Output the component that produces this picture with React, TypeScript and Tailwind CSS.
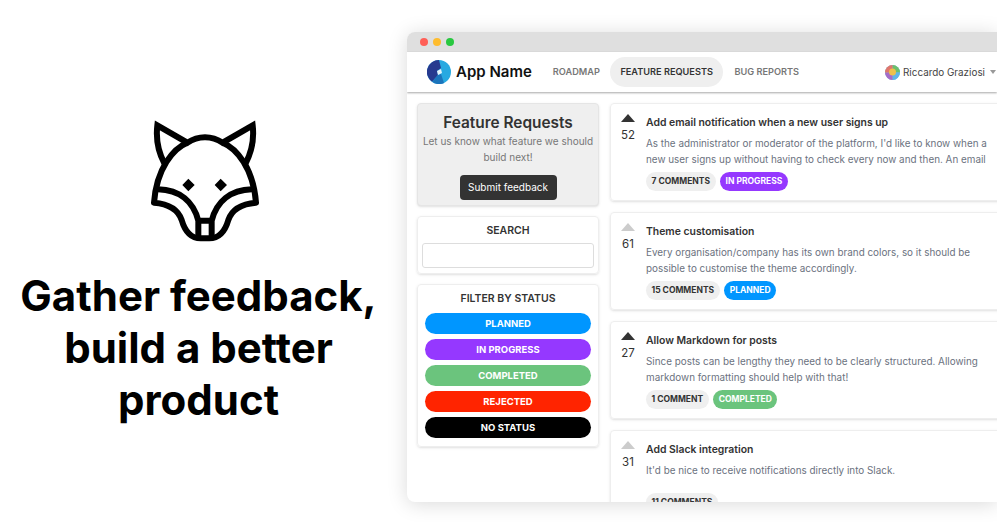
const posts = [
  {
    votes: 52,
    voted: true,
    title: "Add email notification when a new user signs up",
    desc: "As the administrator or moderator of the platform, I'd like to know when a new user signs up without having to check every now and then. An email",
    comments: "7 COMMENTS",
    status: "IN PROGRESS",
    statusClass: "bg-[#9538ff]",
  },
  {
    votes: 61,
    voted: false,
    title: "Theme customisation",
    desc: "Every organisation/company has its own brand colors, so it should be possible to customise the theme accordingly.",
    comments: "15 COMMENTS",
    status: "PLANNED",
    statusClass: "bg-[#0096ff]",
  },
  {
    votes: 27,
    voted: true,
    title: "Allow Markdown for posts",
    desc: "Since posts can be lengthy they need to be clearly structured. Allowing markdown formatting should help with that!",
    comments: "1 COMMENT",
    status: "COMPLETED",
    statusClass: "bg-[#6bc47d]",
  },
  {
    votes: 31,
    voted: false,
    title: "Add Slack integration",
    desc: "It'd be nice to receive notifications directly into Slack.",
    comments: "11 COMMENTS",
    status: "",
    statusClass: "",
  },
];

const filters = [
  { label: "PLANNED", color: "bg-[#0096ff]" },
  { label: "IN PROGRESS", color: "bg-[#9538ff]" },
  { label: "COMPLETED", color: "bg-[#6bc47d]" },
  { label: "REJECTED", color: "bg-[#ff2400]" },
  { label: "NO STATUS", color: "bg-black" },
];

function Fox() {
  return (
    <svg className="ml-[13px] w-[150px] h-[150px]" viewBox="0 0 450 450" fill="none" stroke="black" strokeWidth="18">
      <path d="M103 190 C82 150 78 110 82 76 L172 128 C205 106 245 106 278 128 L368 76 C372 110 368 150 347 190" strokeLinejoin="miter" />
      <path d="M172 128 C130 145 80 205 72 308 C120 312 145 330 155 360 C165 395 185 415 212 415 L238 415 C265 415 285 395 295 360 C305 330 330 312 378 308 C370 205 320 145 278 128" strokeLinejoin="round" />
      <path d="M84 268 C150 270 190 305 205 362 L205 410 M366 268 C300 270 260 305 245 362 L245 410 M205 362 L245 362" />
      <path d="M175 236 L194 255 L175 274 L157 255 Z M272 236 L291 255 L272 274 L254 255 Z" fill="black" stroke="none" />
    </svg>
  );
}

function Logo() {
  return (
    <svg className="w-6 h-6 shrink-0" viewBox="0 0 24 24">
      <circle cx="12" cy="12" r="12" fill="#27a9e1" />
      <path d="M12 0 A12 12 0 0 0 5 21.8 L11 15 L10 11 L14 8 Z" fill="#263a8f" />
      <path d="M5 21.8 A12 12 0 0 0 17 22.9 L14 14 L11 15 Z" fill="#1c75bc" />
      <path d="M10 11 L14 9 L15 13 L11 15 Z" fill="#e6f4fb" />
    </svg>
  );
}

function Avatar() {
  return (
    <svg className="w-[15px] h-[15px] shrink-0" viewBox="0 0 15 15">
      <circle cx="7.5" cy="7.5" r="7.5" fill="#7fb8d8" />
      <path d="M7.5 0 A7.5 7.5 0 0 1 15 7.5 L7.5 7.5 Z" fill="#6cc06c" />
      <path d="M15 7.5 A7.5 7.5 0 0 1 7.5 15 L7.5 7.5 Z" fill="#5fb5e8" />
      <path d="M7.5 15 A7.5 7.5 0 0 1 0 7.5 L7.5 7.5 Z" fill="#a56cc8" />
      <path d="M0 7.5 A7.5 7.5 0 0 1 7.5 0 L7.5 7.5 Z" fill="#e0766c" />
      <circle cx="7.5" cy="7" r="3.5" fill="#efc04a" />
    </svg>
  );
}

function Arrow({ active }: { active: boolean }) {
  return (
    <svg className="w-[14px] h-[8px]" viewBox="0 0 14 8">
      <path d="M7 0 L14 8 L0 8 Z" fill={active ? "#333333" : "#cccccc"} />
    </svg>
  );
}

export default function App() {
  return (
    <div className="w-[997px] h-[522px] overflow-hidden bg-white flex font-['Inter',sans-serif]">
      {/* Left pitch */}
      <div className="w-[397px] shrink-0 flex flex-col items-center pt-[100px]">
        <Fox />
        <h1 className="mt-[20px] text-[42px] leading-[52px] font-bold text-black text-center whitespace-nowrap">
          Gather feedback,
          <br />
          build a better
          <br />
          product
        </h1>
      </div>

      {/* App window */}
      <div className="ml-[10px] mt-[32px] w-[590px] h-[470px] shrink-0 overflow-hidden rounded-l-lg bg-white shadow-[0_2px_20px_rgba(0,0,0,0.15)] flex flex-col">
        <div className="h-5 shrink-0 bg-[#dfdfdf] flex items-center gap-[5px] pl-[13px]">
          <span className="w-2 h-2 rounded-full bg-[#ff5f57]" />
          <span className="w-2 h-2 rounded-full bg-[#febc2e]" />
          <span className="w-2 h-2 rounded-full bg-[#28c840]" />
        </div>

        <nav className="h-10 shrink-0 bg-white flex items-center pl-5 pr-[1px] shadow-[0_1px_2px_rgba(0,0,0,0.35)] relative">
          <Logo />
          <span className="ml-[5px] text-[15px] font-semibold text-[#111]">App Name</span>
          <span className="ml-[21px] text-[9.2px] font-semibold text-[#777]">ROADMAP</span>
          <span className="ml-[10px] h-[30px] px-[10.5px] rounded-full bg-[#efefef] flex items-center text-[9.2px] font-semibold text-[#333]">
            FEATURE REQUESTS
          </span>
          <span className="ml-[11px] text-[9.2px] font-semibold text-[#777]">BUG REPORTS</span>
          <div className="ml-auto flex items-center">
            <Avatar />
            <span className="ml-[3px] text-[9.9px] text-[#444]">Riccardo Graziosi</span>
            <svg className="ml-[5px] w-[6px] h-[4px]" viewBox="0 0 6 4">
              <path d="M0 0 L6 0 L3 4 Z" fill="#999999" />
            </svg>
          </div>
        </nav>

        <div className="flex pl-[10px] pt-[11px] gap-[11px] min-h-0">
          {/* Sidebar */}
          <aside className="w-[182px] shrink-0 flex flex-col gap-[10px]">
            <div className="h-[103px] rounded-sm border border-[#e5e5e5] bg-[#efefef] shadow-sm flex flex-col items-center pt-[8px]">
              <h2 className="text-[15.4px] leading-[22px] font-semibold text-[#333]">Feature Requests</h2>
              <p className="-mt-[1px] text-[10px] leading-4 text-[#777] text-center">
                Let us know what feature we should
                <br />
                build next!
              </p>
              <button className="mt-[10px] w-[97px] h-[25px] rounded-sm bg-[#333] text-[10px] text-white">Submit feedback</button>
            </div>

            <div className="h-[58px] rounded-sm border border-[#eeeeee] shadow-sm flex flex-col items-center pt-[7px] px-[4px]">
              <span className="text-[10.5px] leading-[14px] font-semibold text-[#333]">SEARCH</span>
              <input className="mt-[5px] w-full h-[25px] rounded-[3px] border border-[#dddddd] bg-white" />
            </div>

            <div className="h-[163px] rounded-sm border border-[#eeeeee] shadow-sm flex flex-col items-center pt-[7px] px-[7px]">
              <span className="text-[10.5px] leading-[14px] font-semibold text-[#333]">FILTER BY STATUS</span>
              <div className="mt-[7px] w-full flex flex-col gap-[5.5px]">
                {filters.map((f) => (
                  <div
                    key={f.label}
                    className={`h-[20.5px] pt-[1px] rounded-full ${f.color} flex items-center justify-center text-[9.5px] font-bold text-white`}
                  >
                    {f.label}
                  </div>
                ))}
              </div>
            </div>
          </aside>

          {/* Posts */}
          <main className="w-[400px] shrink-0 flex flex-col gap-[11px]">
            {posts.map((p) => (
              <article key={p.title} className="shrink-0 rounded-sm border border-[#eeeeee] shadow-sm flex pl-[10px] pt-[11px] pb-[9px]">
                <div className="-mt-[1px] w-[14px] shrink-0 flex flex-col items-center">
                  <Arrow active={p.voted} />
                  <span className="mt-[6px] text-[11.5px] leading-[14px] text-[#333]">{p.votes}</span>
                </div>
                <div className="ml-[11px] w-[350px]">
                  <h3 className="text-[10.4px] leading-4 font-semibold text-[#333]">{p.title}</h3>
                  <p className="mt-[4px] min-h-[26px] text-[9.9px] leading-4 text-[#6b7280]">{p.desc}</p>
                  <div className="mt-[5px] flex gap-[4.5px]">
                    <span className="h-[19px] px-[5.5px] rounded-full bg-[#efefef] flex items-center text-[8.5px] font-bold text-[#333]">
                      {p.comments}
                    </span>
                    {p.status && (
                      <span className={`h-[19px] px-[5.5px] rounded-full ${p.statusClass} flex items-center text-[8.5px] font-bold text-white`}>
                        {p.status}
                      </span>
                    )}
                  </div>
                </div>
              </article>
            ))}
          </main>
        </div>
      </div>
    </div>
  );
}
